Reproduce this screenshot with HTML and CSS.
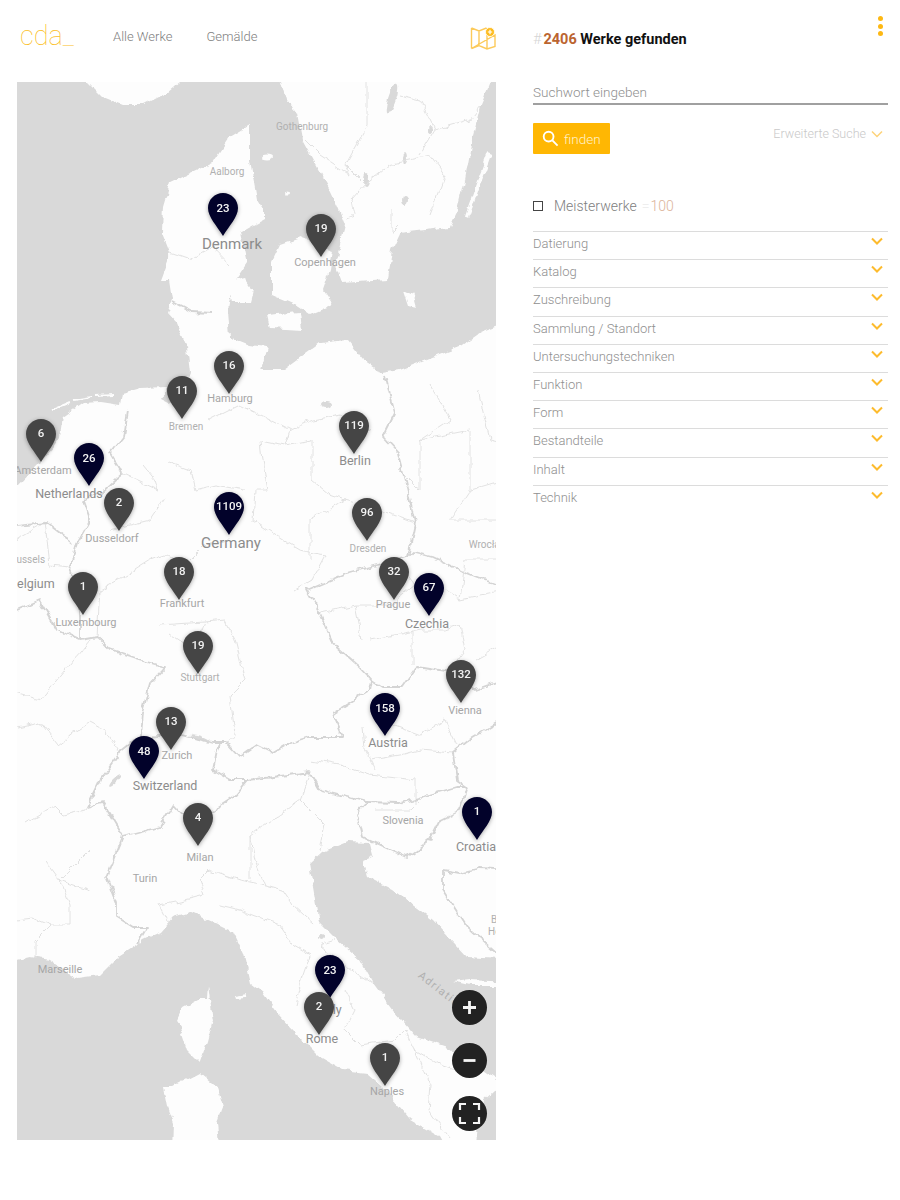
FILE: index.html

```html
<!DOCTYPE html>
<html lang="de">
<head>
    <meta charset="UTF-8">
    <title>cda_ Karte</title>
    <link rel="stylesheet" href="styles.css">
</head>
<body>

<div class="page">

<div class="left">
    <div class="topbar">
        <div class="logo">cda_</div>
        <div class="nav-link first">Alle Werke</div>
        <div class="nav-link">Gemälde</div>
        <svg class="map-icon" viewBox="0 0 26 24" width="26" height="24">
            <path d="M1.500 2 L9 5 L16.500 2 M25 9 V20.500 L17 23 L9 19.500 L1.500 22.500 Z M1.500 2 V22.500 M9 5 V19.500 M17 2 V23"/>
            <circle class="badge" cx="20" cy="6" r="4.500"/>
            <path class="badge-plus" d="M20 3.800 V8.200 M17.800 6 H22.200"/>
        </svg>
    </div>

    <div class="map">
        <svg class="map-canvas" viewBox="17 82 479 1058" width="479" height="1058">
            <defs>
                <filter id="rough" x="0" y="0" width="100%" height="100%">
                    <feTurbulence type="fractalNoise" baseFrequency="0.09" numOctaves="3" seed="4" result="noise"/>
                    <feDisplacementMap in="SourceGraphic" in2="noise" scale="7" xChannelSelector="R" yChannelSelector="G"/>
                    <feGaussianBlur stdDeviation="0.35"/>
                </filter>
                <path id="pin" d="M0 43 C-6 33 -15 24 -15 15 C-15 6.700 -8.300 0 0 0 C8.300 0 15 6.700 15 15 C15 24 6 33 0 43 Z"/>
            </defs>

            <g class="terrain">
                <rect class="sea" x="0" y="60" width="520" height="1100"/>
                <!-- land -->
                <g class="land">
                    <polygon points="250,125 250,160 257,200 263,210 263,220 240,233 247,263 232,285 228,310 230,337 250,345 267,347 270,337 260,370 283,370 320,343 347,340 363,360 383,373 400,370 460,347 480,333 515,320 515,1155 0,1155 0,505 17,487 40,463 53,447 60,437 63,417 83,403 100,402 120,405 122,393 140,388 167,387 160,400 170,405 185,385 190,373 187,347 177,323 168,313 173,300 170,280 160,280 170,253 162,233 163,207 170,183 213,163 230,137"/>
                    <polygon points="80,65 88,82 103,97 123,105 143,105 167,93 180,82 185,65"/>
                    <polygon points="278,65 282,82 287,100 297,113 302,140 313,160 330,190 338,207 345,225 340,245 335,265 342,283 388,280 392,250 400,233 450,227 458,210 465,180 472,140 480,107 483,100 490,82 495,65"/>
                    <polygon points="272,262 280,245 300,238 318,245 333,250 330,270 323,290 333,305 310,315 295,305 272,295"/>
                    <polygon points="267,315 300,312 302,330 270,328"/>
                    <polygon points="228,282 245,278 253,290 250,302 232,302"/>
                    <polygon points="403,290 415,296 418,307 408,305"/>
                    <ellipse cx="267" cy="157" rx="6" ry="2.500"/>
                    <ellipse cx="288" cy="194" rx="3" ry="1.500"/>
                </g>
                <path class="island-strip" d="M490 153 L478 185 L467 217"/>
                <path class="island-dash" d="M53 409 L70 402 M74 400 L92 397 M96 396 L113 395"/>

                <!-- sea -->
                <g class="sea">
                    <polygon points="0,960 17,960 30,957 50,960 77,978 100,975 117,958 137,945 143,940 160,932 173,917 190,912 213,922 233,932 243,953 250,983 263,993 277,1013 293,1030 320,1057 343,1070 367,1073 383,1087 393,1100 410,1120 440,1137 450,1155 0,1155"/>
                    <polygon points="310,863 322,852 347,842 370,843 373,855 362,860 367,877 393,890 433,920 467,957 515,960 515,1090 496,1080 447,1047 417,1037 393,1010 373,983 360,960 337,940 320,923 315,893"/>
                    <polygon points="475,1155 480,1105 496,1090 515,1085 515,1155"/>
                    <ellipse cx="392" cy="99" rx="4" ry="16" transform="rotate(18 392 99)"/>
                    <ellipse cx="326" cy="404" rx="5" ry="3"/>
                    <ellipse cx="200" cy="738" rx="10" ry="2" transform="rotate(18 200 738)"/>
                    <ellipse cx="115" cy="780" rx="8" ry="2" transform="rotate(-45 115 780)"/>
                    <ellipse cx="321" cy="937" rx="3" ry="3"/>
                    <ellipse cx="405" cy="160" rx="2" ry="6"/>
                    <ellipse cx="430" cy="130" rx="2" ry="4"/>
                    <ellipse cx="366" cy="180" rx="3" ry="7"/>
                    <ellipse cx="405" cy="200" rx="3" ry="5"/>
                </g>
                <g class="land">
                    <polygon points="208,985 210,1000 213,1020 207,1043 200,1063 187,1050 177,1020 183,1007 200,998 207,998"/>
                    <polygon points="200,1073 217,1087 223,1107 217,1123 220,1155 172,1155 173,1123 167,1107 163,1087 173,1087"/>
                    <polygon points="235,995 247,993 246,997 236,998"/>
                    <polygon points="453,982 470,980 515,982 515,986 470,986"/>
                </g>

                <!-- thin region lines -->
                <g class="region">
                    <polyline points="367,70 367,125 345,165 350,175 320,155 305,140"/>
                    <polyline points="345,165 365,185 352,200 355,215 347,218"/>
                    <polyline points="365,185 390,165 430,155 445,175 430,215"/>
                    <polyline points="400,95 420,100 435,130 420,155"/>
                    <polyline points="435,130 470,120 480,107"/>
                    <polyline points="392,210 392,233 400,225"/>
                    <polyline points="170,253 190,260 213,247 230,265"/>
                    <polyline points="210,420 240,405 265,417 290,430 285,445 260,440 262,460 268,490 255,490 253,520 283,540 300,550 325,555 312,580 295,590"/>
                    <polyline points="290,430 313,420 340,415 370,430"/>
                    <polyline points="285,445 312,440 312,480 330,495 345,500 310,520 310,560"/>
                    <polyline points="345,500 380,510 415,523"/>
                    <polyline points="168,462 190,470 195,490 215,485 245,490"/>
                    <polyline points="143,465 155,480 158,490 122,473"/>
                    <polyline points="110,530 150,520 165,498"/>
                    <polyline points="150,560 165,555 185,565 205,545 230,540"/>
                    <polyline points="150,560 118,580 100,590 97,637"/>
                    <polyline points="205,622 225,620 235,640 245,680 230,695 235,735 228,743"/>
                    <polyline points="160,625 205,622 195,650 170,633"/>
                    <polyline points="17,727 40,722 58,745 75,732 90,722 105,730 120,753"/>
                    <polyline points="25,823 55,805 65,815 85,810 87,807"/>
                    <polyline points="17,920 33,918 50,925 70,925 70,905 60,880 80,860 90,850"/>
                    <polyline points="35,960 35,940 50,925"/>
                    <polyline points="200,880 210,870 240,880 265,885 283,890 293,905 315,925"/>
                    <polyline points="200,880 205,895 185,900 160,905 170,925"/>
                    <polyline points="220,905 240,910 280,925 293,945 310,955 303,975 295,1005"/>
                    <polyline points="335,940 320,945 345,965 373,983"/>
                    <polyline points="345,990 355,1010 345,1030 360,1045 395,1040 405,1030"/>
                    <polyline points="405,1030 415,1050 440,1065 470,1075"/>
                    <polyline points="415,1050 430,1085 428,1110 450,1139"/>
                    <polyline points="250,880 250,835 300,800 310,772"/>
                    <polyline points="300,800 325,825 320,850"/>
                    <polyline points="250,835 255,860 265,885"/>
                    <polyline points="370,760 400,755 420,750 453,753"/>
                    <polyline points="310,760 340,765 370,775 415,780 415,803"/>
                    <polyline points="363,725 365,750 375,770"/>
                    <polyline points="380,700 385,722 420,735 445,720 457,745"/>
                    <polyline points="412,630 412,665"/>
                    <polyline points="370,640 420,630 445,630 460,625 465,650 450,672"/>
                    <polyline points="355,605 390,605 415,585 400,565"/>
                    <polyline points="320,613 355,605 362,640"/>
                    <polyline points="478,390 490,440 510,445"/>
                    <polyline points="430,385 450,420 420,440 420,490 400,470"/>
                    <polyline points="420,440 470,430 470,490 450,520 510,520"/>
                    <polyline points="470,490 510,478"/>
                    <polyline points="460,600 465,560 510,560"/>
                    <polyline points="430,580 460,600 510,590"/>
                    <polyline points="475,660 510,640"/>
                    <polyline points="5,545 45,522 50,565 70,567"/>
                    <polyline points="5,690 40,700 90,640"/>
                    <polyline points="45,860 60,880 90,890"/>
                    <polyline points="375,810 410,810 430,790"/>
                </g>

                <!-- country borders -->
                <g class="border">
                    <polyline points="173,302 192,312 213,313"/>
                    <polyline points="385,375 395,413 383,437 398,453 405,480 415,523 408,557"/>
                    <polyline points="408,557 413,552 433,557 467,573 510,590"/>
                    <polyline points="408,557 347,573 307,590 320,613 333,643 360,667 372,680"/>
                    <polyline points="372,680 370,690 333,713 343,737 310,737 290,743 273,753 257,745 240,757 227,743 213,743 183,735 140,737"/>
                    <polyline points="140,737 142,713 150,683 165,667 140,660 110,650 97,637 80,640 57,630 40,600 5,615"/>
                    <polyline points="127,412 123,437 110,453 122,473 100,493 83,500 90,520 77,543 70,567 80,590 80,640"/>
                    <polyline points="5,527 47,523 73,543"/>
                    <polyline points="140,737 120,753 100,780 87,807 103,803 113,820 123,837 160,827 173,805 187,820 213,810 233,797 247,780 230,780 213,770 217,750 220,743"/>
                    <polyline points="247,780 273,777 310,772 320,790 367,802 400,803 457,787 467,787"/>
                    <polyline points="367,802 357,813 363,837 407,857 430,840 440,820 460,810 467,787"/>
                    <polyline points="467,787 457,780 453,753 473,737 510,715"/>
                    <polyline points="372,680 383,687 403,687 417,667 447,672 475,690 510,678"/>
                    <polyline points="123,837 107,877 117,903 117,917 133,927 147,927 138,943"/>
                    <polyline points="443,870 443,890 467,927 510,965"/>
                    <polyline points="443,870 460,873 480,868 510,870"/>
                </g>
            </g>

            <!-- place names -->
            <g class="place">
                <text class="tiny" x="302" y="130">Gothenburg</text>
                <text class="tiny" x="227" y="175">Aalborg</text>
                <text class="large" x="232" y="249">Denmark</text>
                <text class="small" x="325" y="266">Copenhagen</text>
                <text class="small" x="230" y="402">Hamburg</text>
                <text class="tiny" x="186" y="430">Bremen</text>
                <text class="small" x="43" y="474">Amsterdam</text>
                <text class="mid" x="69" y="498">Netherlands</text>
                <text class="mid" x="355" y="465">Berlin</text>
                <text class="small" x="112" y="542">Dusseldorf</text>
                <text class="large" x="231" y="548">Germany</text>
                <text class="tiny" x="368" y="552">Dresden</text>
                <text class="tiny" x="488" y="548">Wrocław</text>
                <text class="tiny" x="26" y="563">Brussels</text>
                <text class="mid" x="32" y="588">Belgium</text>
                <text class="small" x="86" y="626">Luxembourg</text>
                <text class="small" x="182" y="607">Frankfurt</text>
                <text class="small" x="393" y="608">Prague</text>
                <text class="mid" x="427" y="628">Czechia</text>
                <text class="tiny" x="200" y="681">Stuttgart</text>
                <text class="small" x="465" y="714">Vienna</text>
                <text class="mid" x="388" y="747">Austria</text>
                <text class="small" x="177" y="759">Zurich</text>
                <text class="mid" x="165" y="790">Switzerland</text>
                <text class="small" x="403" y="824">Slovenia</text>
                <text class="mid" x="476" y="851">Croatia</text>
                <text class="small" x="200" y="861">Milan</text>
                <text class="small" x="145" y="882">Turin</text>
                <text class="small" x="60" y="973">Marseille</text>
                <text class="mid" x="330" y="1014">Italy</text>
                <text class="mid" x="322" y="1043">Rome</text>
                <text class="small" x="387" y="1095">Naples</text>
                <text class="tiny start" x="491" y="923">Bosnia</text>
                <text class="tiny start" x="488" y="935">Herzegovina</text>
                <text class="small sea-name" transform="translate(437 992) rotate(38)">Adriatic</text>
            </g>

            <!-- markers -->
            <g class="pin grey" transform="translate(321 214)"><use href="#pin"/><text y="18">19</text></g>
            <g class="pin navy" transform="translate(223 193)"><use href="#pin"/><text y="19">23</text></g>
            <g class="pin grey" transform="translate(229 351)"><use href="#pin"/><text y="18">16</text></g>
            <g class="pin grey" transform="translate(182 376)"><use href="#pin"/><text y="18">11</text></g>
            <g class="pin grey" transform="translate(41 419)"><use href="#pin"/><text y="18">6</text></g>
            <g class="pin navy" transform="translate(89 443)"><use href="#pin"/><text y="19">26</text></g>
            <g class="pin grey" transform="translate(354 411)"><use href="#pin"/><text y="18">119</text></g>
            <g class="pin grey" transform="translate(119 488)"><use href="#pin"/><text y="18">2</text></g>
            <g class="pin navy" transform="translate(229 492)"><use href="#pin"/><text y="18">1109</text></g>
            <g class="pin grey" transform="translate(367 498)"><use href="#pin"/><text y="18">96</text></g>
            <g class="pin grey" transform="translate(179 557)"><use href="#pin"/><text y="18">18</text></g>
            <g class="pin grey" transform="translate(394 557)"><use href="#pin"/><text y="18">32</text></g>
            <g class="pin navy" transform="translate(429 573)"><use href="#pin"/><text y="18">67</text></g>
            <g class="pin grey" transform="translate(83 572)"><use href="#pin"/><text y="18">1</text></g>
            <g class="pin grey" transform="translate(198 631)"><use href="#pin"/><text y="18">19</text></g>
            <g class="pin grey" transform="translate(461 660)"><use href="#pin"/><text y="18">132</text></g>
            <g class="pin navy" transform="translate(385 693)"><use href="#pin"/><text y="19">158</text></g>
            <g class="pin grey" transform="translate(171 707)"><use href="#pin"/><text y="18">13</text></g>
            <g class="pin navy" transform="translate(144 736)"><use href="#pin"/><text y="19">48</text></g>
            <g class="pin grey" transform="translate(198 803)"><use href="#pin"/><text y="18">4</text></g>
            <g class="pin navy" transform="translate(477 797)"><use href="#pin"/><text y="18">1</text></g>
            <g class="pin navy" transform="translate(330 955)"><use href="#pin"/><text y="19">23</text></g>
            <g class="pin grey" transform="translate(319 992)"><use href="#pin"/><text y="18">2</text></g>
            <g class="pin grey" transform="translate(385 1043)"><use href="#pin"/><text y="18">1</text></g>
        </svg>

        <div class="map-controls">
            <div class="map-btn">
                <svg viewBox="0 0 35 35" width="35" height="35"><path d="M17.500 11 V24 M11 17.500 H24"/></svg>
            </div>
            <div class="map-btn">
                <svg viewBox="0 0 35 35" width="35" height="35"><path d="M11.500 17.500 H23.500"/></svg>
            </div>
            <div class="map-btn">
                <svg viewBox="0 0 35 35" width="35" height="35"><path class="thin" d="M8 14 V8 H14 M21 8 H27 V14 M27 21 V27 H21 M14 27 H8 V21"/></svg>
            </div>
        </div>
    </div>
</div>

<div class="right">
    <div class="more">
        <span class="dot"></span>
        <span class="dot"></span>
        <span class="dot"></span>
    </div>

    <div class="result-title"><span class="hash">#</span><span class="count">2406</span> Werke gefunden</div>

    <div class="search-input">Suchwort eingeben</div>

    <div class="search-row">
        <div class="find-btn">
            <svg viewBox="0 0 18 18" width="17" height="17"><circle cx="7" cy="7" r="5.200"/><path d="M11 11 L16.500 16.500"/></svg>
            <span>finden</span>
        </div>
        <div class="advanced">
            <span>Erweiterte Suche</span>
            <svg class="chevron pale" viewBox="0 0 12 8" width="12" height="8"><path d="M1 1.500 L6 6.500 L11 1.500"/></svg>
        </div>
    </div>

    <div class="masterworks">
        <span class="checkbox"></span>
        <span class="mw-label">Meisterwerke</span>
        <span class="mw-eq">=</span><span class="mw-count">100</span>
    </div>

    <div class="filters">
        <div class="filter-row"><span>Datierung</span><svg class="chevron" viewBox="0 0 12 8" width="12" height="8"><path d="M1 1.500 L6 6.500 L11 1.500"/></svg></div>
        <div class="filter-row"><span>Katalog</span><svg class="chevron" viewBox="0 0 12 8" width="12" height="8"><path d="M1 1.500 L6 6.500 L11 1.500"/></svg></div>
        <div class="filter-row"><span>Zuschreibung</span><svg class="chevron" viewBox="0 0 12 8" width="12" height="8"><path d="M1 1.500 L6 6.500 L11 1.500"/></svg></div>
        <div class="filter-row"><span>Sammlung / Standort</span><svg class="chevron" viewBox="0 0 12 8" width="12" height="8"><path d="M1 1.500 L6 6.500 L11 1.500"/></svg></div>
        <div class="filter-row"><span>Untersuchungstechniken</span><svg class="chevron" viewBox="0 0 12 8" width="12" height="8"><path d="M1 1.500 L6 6.500 L11 1.500"/></svg></div>
        <div class="filter-row"><span>Funktion</span><svg class="chevron" viewBox="0 0 12 8" width="12" height="8"><path d="M1 1.500 L6 6.500 L11 1.500"/></svg></div>
        <div class="filter-row"><span>Form</span><svg class="chevron" viewBox="0 0 12 8" width="12" height="8"><path d="M1 1.500 L6 6.500 L11 1.500"/></svg></div>
        <div class="filter-row"><span>Bestandteile</span><svg class="chevron" viewBox="0 0 12 8" width="12" height="8"><path d="M1 1.500 L6 6.500 L11 1.500"/></svg></div>
        <div class="filter-row"><span>Inhalt</span><svg class="chevron" viewBox="0 0 12 8" width="12" height="8"><path d="M1 1.500 L6 6.500 L11 1.500"/></svg></div>
        <div class="filter-row"><span>Technik</span><svg class="chevron" viewBox="0 0 12 8" width="12" height="8"><path d="M1 1.500 L6 6.500 L11 1.500"/></svg></div>
    </div>
</div>

</div>

</body>
</html>
```

FILE: styles.css

```css
body {
    margin: 0;
    background: #fff;
    font-family: Roboto, "Noto Sans", sans-serif;
    font-weight: 300;
    color: #8a8a8a;
}
.page {
    display: flex;
    width: 900px;
    height: 1200px;
    overflow: hidden;
}

/* left column */
.left {
    width: 479px;
    margin-left: 17px;
}
.topbar {
    display: flex;
    align-items: center;
    height: 82px;
    padding-bottom: 10px;
    box-sizing: border-box;
}
.logo {
    width: 93px;
    padding-left: 3px;
    box-sizing: border-box;
    font-size: 27px;
    font-weight: 100;
    color: #fbbf2a;
}
.nav-link {
    margin-left: 34px;
    font-size: 13px;
    color: #808080;
}
.nav-link.first {
    margin-left: 3px;
}
.map-icon {
    margin-left: auto;
    margin-top: 4px;
}
.map-icon path {
    fill: none;
    stroke: #fcca5a;
    stroke-width: 1.400;
}
.map-icon .badge {
    fill: #fdbb1c;
    stroke: #fff;
    stroke-width: 0.800;
}
.map-icon .badge-plus {
    stroke: #fff;
    stroke-width: 1.200;
}

.map {
    position: relative;
    width: 479px;
    height: 1058px;
    background: #d9d9d9;
    overflow: hidden;
}
.map-canvas {
    display: block;
}
.terrain {
    filter: url(#rough);
}
.land {
    fill: #fdfdfd;
}
.sea {
    fill: #d9d9d9;
}
.island-strip {
    fill: none;
    stroke: #fdfdfd;
    stroke-width: 4;
}
.island-dash {
    fill: none;
    stroke: #fdfdfd;
    stroke-width: 2;
}
.region polyline {
    fill: none;
    stroke: #e2e2e2;
    stroke-width: 1;
    stroke-linejoin: round;
}
.border polyline {
    fill: none;
    stroke: #d4d4d4;
    stroke-width: 1.800;
    stroke-linejoin: round;
}

.place text {
    font-family: Roboto, sans-serif;
    font-weight: 400;
    text-anchor: middle;
    fill: #a3a3a3;
}
.place .tiny {
    font-size: 10px;
    fill: #b0b0b0;
}
.place .small {
    font-size: 11px;
    fill: #a6a6a6;
}
.place .mid {
    font-size: 12.500px;
    fill: #8c8c8c;
}
.place .large {
    font-size: 15px;
    fill: #8c8c8c;
}
.place .start {
    text-anchor: start;
}
.place .sea-name {
    fill: #b0b0b0;
    letter-spacing: 1.500px;
}

.pin {
    filter: drop-shadow(0 1px 2px rgba(0, 0, 0, 0.35));
}
.pin.grey use {
    fill: #454545;
}
.pin.navy use {
    fill: #02022a;
}
.pin text {
    font-family: Roboto, sans-serif;
    font-size: 11.500px;
    font-weight: 500;
    text-anchor: middle;
    fill: #f2f2f2;
}

.map-controls {
    position: absolute;
    right: 9px;
    bottom: 9px;
    display: flex;
    flex-direction: column;
    gap: 18px;
}
.map-btn {
    width: 35px;
    height: 35px;
    border-radius: 50%;
    background: #222;
}
.map-btn svg {
    display: block;
}
.map-btn path {
    fill: none;
    stroke: #f5f5f5;
    stroke-width: 2.800;
}
.map-btn path.thin {
    stroke-width: 2.200;
}

/* right column */
.right {
    position: relative;
    width: 355px;
    margin-left: 37px;
}
.more {
    position: absolute;
    top: 16px;
    right: 5px;
    display: flex;
    flex-direction: column;
    gap: 2.500px;
}
.dot {
    width: 5px;
    height: 5px;
    border-radius: 50%;
    background: #fdb813;
}
.result-title {
    margin-top: 31px;
    font-size: 14.500px;
    line-height: 17px;
    font-weight: 700;
    color: #111;
}
.hash {
    margin-right: 2px;
    font-weight: 300;
    color: #d5d5d5;
}
.count {
    color: #bb6430;
}
.search-input {
    margin-top: 29px;
    height: 28px;
    line-height: 30px;
    font-size: 13.500px;
    color: #8f8f8f;
    border-bottom: 2px solid #a0a0a0;
    box-sizing: border-box;
}
.search-row {
    display: flex;
    justify-content: space-between;
    margin-top: 18px;
}
.find-btn {
    display: flex;
    align-items: center;
    width: 77px;
    height: 31px;
    padding-left: 9px;
    box-sizing: border-box;
    background: #ffb703;
    border-radius: 1px;
    font-size: 13.500px;
    color: #fff2cc;
}
.find-btn svg {
    margin-right: 5px;
}
.find-btn circle,
.find-btn path {
    fill: none;
    stroke: #fff;
    stroke-width: 2;
}
.advanced {
    display: flex;
    align-items: center;
    gap: 5px;
    height: 21px;
    padding-right: 5px;
    font-size: 12.500px;
    color: #c9c9c9;
}
.chevron path {
    fill: none;
    stroke: #fdbb2d;
    stroke-width: 2;
}
.chevron.pale path {
    stroke: #fdd37a;
    stroke-width: 1.500;
}
.masterworks {
    display: flex;
    align-items: center;
    margin-top: 42px;
    height: 20px;
    font-size: 14px;
}
.checkbox {
    width: 10px;
    height: 10px;
    margin-right: 11px;
    border: 1.500px solid #444;
    box-sizing: border-box;
}
.mw-label {
    color: #808080;
}
.mw-eq {
    margin-left: 5px;
    color: #eee;
}
.mw-count {
    margin-left: 1px;
    color: #dcb49a;
}
.filters {
    margin-top: 15px;
}
.filter-row {
    display: flex;
    justify-content: space-between;
    height: 28.200px;
    padding: 0 5px 0 0;
    box-sizing: border-box;
    border-top: 1.500px solid #dcdcdc;
    font-size: 13px;
    line-height: 24px;
    color: #8f8f8f;
}
.filter-row .chevron {
    margin-top: 5px;
}
```
